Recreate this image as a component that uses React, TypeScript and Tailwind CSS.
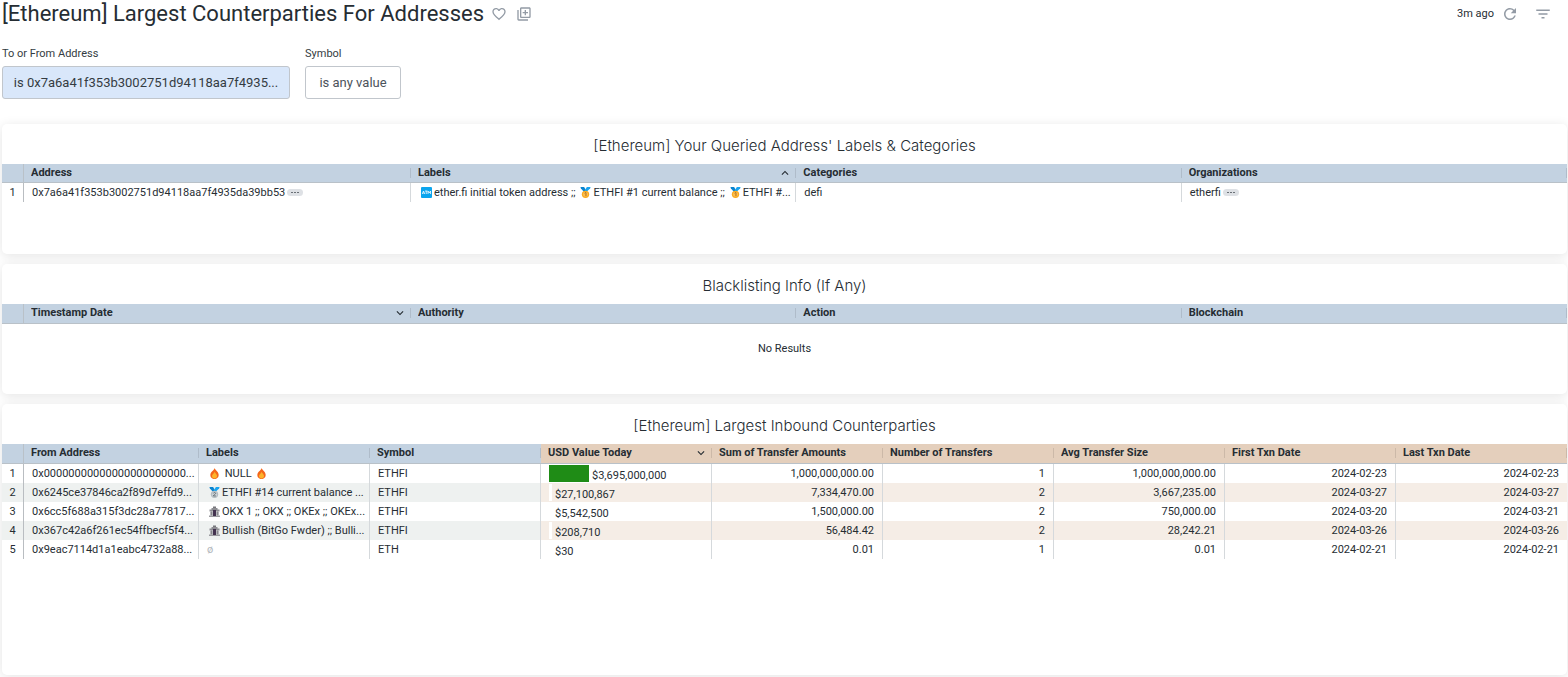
import React from "react";
import {
  MdExpandLess,
  MdExpandMore,
  MdFavoriteBorder,
  MdFilterList,
  MdOutlineLibraryAdd,
  MdRefresh,
} from "react-icons/md";

type Tone = "blue" | "tan";
type Column = { title: string; tone?: Tone; sort?: "asc" | "desc"; width?: string; numeric?: boolean };

const glyph = "mx-0.5 inline-block size-[11px] shrink-0 align-[-2px]";

function Fire() {
  return (
    <svg viewBox="0 0 22 24" className={glyph} role="img" aria-label="fire">
      <path d="M11 0c1 4 8 7 9 14 .6 6-4 10-9 10s-9.600-4-9-10c.4-3 2-5 3.500-6.500C8 5.500 10 4 11 0z" fill="#f4661b" />
      <path d="M11.500 8c.5 3 5 5 5 9.500 0 3.500-2.500 5.500-5.500 5.500s-5.500-2-5.500-5.500C5.500 13.500 10 12 11.500 8z" fill="#fdb32b" />
    </svg>
  );
}

function Medal({ rank }: { rank: 1 | 2 }) {
  const rim = rank === 1 ? "#fba81c" : "#b4bcc1";
  const face = rank === 1 ? "#fdc04f" : "#ccd2d6";
  const mark = rank === 1 ? "#a8641a" : "#5f6a70";
  return (
    <svg viewBox="0 0 22 24" className={glyph} role="img" aria-label={rank === 1 ? "gold medal" : "silver medal"}>
      <path d="M0 0h8l4 7-4 4L1 3z" fill="#0a84d0" />
      <path d="M22 0h-8l-5 8 4 3 8-8z" fill="#1ba4ee" />
      <circle cx="11" cy="16" r="8" fill={rim} />
      <circle cx="11" cy="16" r="5.500" fill={face} />
      {rank === 1 ? (
        <path d="M9 13.500l2-1.500h1v8" fill="none" stroke={mark} strokeWidth="2" />
      ) : (
        <path d="M8.500 14c.5-2.500 5-2.500 5 0 0 2-5 3-5 5.500h5.500" fill="none" stroke={mark} strokeWidth="2" />
      )}
    </svg>
  );
}

function Bank() {
  return (
    <svg viewBox="0 0 22 22" className={glyph} role="img" aria-label="bank">
      <path d="M8 1h6v4h-6z" fill="#77777c" />
      <path d="M5 4h12v3h4v4H1V7h4z" fill="#8c8c91" />
      <path d="M2 11h18v8H2z" fill="#b4b4b9" />
      <path d="M4 11h1.500v8H4zM16.500 11H18v8h-1.500z" fill="#77777c" />
      <path d="M0 19h22v3H0z" fill="#9a9a9f" />
      <path d="M8 8h6v12H8z" fill="#43324f" />
    </svg>
  );
}

function Atm() {
  return (
    <svg viewBox="0 0 22 22" className={glyph} role="img" aria-label="ATM">
      <rect width="22" height="22" rx="2" fill="#0ba5ee" />
      <path d="M2.500 14l2.500-6 2.500 6M3.500 12h3M8 8h5M10.500 8v6M14 14V8l2.500 4L19 8v6" fill="none" stroke="#fff" strokeWidth="1.500" />
    </svg>
  );
}

function More() {
  return (
    <button
      type="button"
      aria-label="More actions"
      className="ml-0.5 inline-flex h-[7px] w-4 items-center justify-center gap-px rounded-full bg-[#dee1e5] align-middle"
    >
      <i className="h-px w-0.5 bg-[#6b7177]" />
      <i className="h-px w-0.5 bg-[#6b7177]" />
      <i className="h-px w-0.5 bg-[#6b7177]" />
    </button>
  );
}

function Card({ title, children, className }: { title: string; children: React.ReactNode; className: string }) {
  return (
    <section className={`flex flex-col rounded-[5px] bg-white shadow-[0_2px_12px_rgba(0,0,0,0.11)] ${className}`}>
      <h2 className="flex h-10 shrink-0 items-center justify-center pt-1 font-[Inter,sans-serif] text-[15px] font-light text-[#262d33]">
        {title}
      </h2>
      {children}
    </section>
  );
}

function DataTable({
  columns,
  rows,
  headHeight = "h-5",
}: {
  columns: Column[];
  rows: React.ReactNode[][];
  headHeight?: string;
}) {
  return (
    <table className="w-full table-fixed border-separate border-spacing-0 text-[11px] leading-4 text-[#262d33]">
      <colgroup>
        <col className="w-[22px]" />
        {columns.map((c) => (
          <col key={c.title} className={c.width} />
        ))}
      </colgroup>
      <thead>
        <tr className={headHeight}>
          <th className="border-r border-b border-[#b9c1c8] bg-[#c3d2e1] p-0" />
          {columns.map((c) => (
            <th
              key={c.title}
              scope="col"
              className={`border-b border-[#b9c1c8] p-0 text-left align-top font-bold ${c.tone === "tan" ? "bg-[#e4cfbc]" : "bg-[#c3d2e1]"}`}
            >
              <div className="flex h-[18px] items-center pl-[7px]">
                <span className="grow truncate">{c.title}</span>
                {c.sort === "asc" && <MdExpandLess className="mr-[3px] size-3.5 shrink-0" />}
                {c.sort === "desc" && <MdExpandMore className="mr-[3px] size-3.5 shrink-0" />}
                <span className="h-2.5 w-px shrink-0 bg-black/10" />
              </div>
            </th>
          ))}
        </tr>
      </thead>
      <tbody>
        {rows.map((row, r) => (
          <tr key={r} className="h-[19px]">
            <td className={`border-r border-[#b9bdc1] p-0 text-center ${r % 2 ? "bg-[#eef1f0]" : ""}`}>{r + 1}</td>
            {row.map((cell, i) => {
              const stripe = r % 2 === 0 ? "" : columns[i].tone === "tan" ? "bg-[#f5ede6]" : "bg-[#eef1f0]";
              const edge = i < row.length - 1 ? "border-r border-[#d5d9dc]" : "";
              const side = columns[i].numeric ? "text-right" : "text-left";
              return (
                <td key={i} className={`overflow-hidden px-2 py-0 whitespace-nowrap ${stripe} ${edge} ${side}`}>
                  {cell}
                </td>
              );
            })}
          </tr>
        ))}
      </tbody>
    </table>
  );
}

function Bar({ width, color, children }: { width: number; color: string; children: React.ReactNode }) {
  return (
    <div className="flex h-[17px] items-start gap-[3px]">
      <span className="h-full shrink-0" style={{ width, background: color }} />
      <span className="pt-[3px]">{children}</span>
    </div>
  );
}

const labelColumns: Column[] = [
  { title: "Address", width: "w-[387px]" },
  { title: "Labels", sort: "asc" },
  { title: "Categories" },
  { title: "Organizations" },
];

const blacklistColumns: Column[] = [
  { title: "Timestamp Date", width: "w-[387px]", sort: "desc" },
  { title: "Authority" },
  { title: "Action" },
  { title: "Blockchain" },
];

const inboundColumns: Column[] = [
  { title: "From Address", width: "w-[175px]" },
  { title: "Labels" },
  { title: "Symbol" },
  { title: "USD Value Today", tone: "tan", sort: "desc" },
  { title: "Sum of Transfer Amounts", tone: "tan", numeric: true },
  { title: "Number of Transfers", tone: "tan", numeric: true },
  { title: "Avg Transfer Size", tone: "tan", numeric: true },
  { title: "First Txn Date", tone: "tan", numeric: true },
  { title: "Last Txn Date", tone: "tan", numeric: true },
];

const labelRows: React.ReactNode[][] = [
  [
    <>0x7a6a41f353b3002751d94118aa7f4935da39bb53<More /></>,
    <><Atm />ether.fi initial token address ;; <Medal rank={1} />ETHFI #1 current balance ;; <Medal rank={1} />ETHFI #...</>,
    "defi",
    <>etherfi<More /></>,
  ],
];

const inboundRows: React.ReactNode[][] = [
  ["0x00000000000000000000000...", <><Fire /> NULL <Fire /></>, "ETHFI", <Bar width={40} color="#1f8c16">$3,695,000,000</Bar>, "1,000,000,000.00", "1", "1,000,000,000.00", "2024-02-23", "2024-02-23"],
  ["0x6245ce37846ca2f89d7effd9...", <><Medal rank={2} />ETHFI #14 current balance ...</>, "ETHFI", <Bar width={3} color="#ffffff">$27,100,867</Bar>, "7,334,470.00", "2", "3,667,235.00", "2024-03-27", "2024-03-27"],
  ["0x6cc5f688a315f3dc28a77817...", <><Bank />OKX 1 ;; OKX ;; OKEx ;; OKEx...</>, "ETHFI", <Bar width={3} color="#ffffff">$5,542,500</Bar>, "1,500,000.00", "2", "750,000.00", "2024-03-20", "2024-03-21"],
  ["0x367c42a6f261ec54ffbecf5f4...", <><Bank />Bullish (BitGo Fwder) ;; Bulli...</>, "ETHFI", <Bar width={3} color="#ffffff">$208,710</Bar>, "56,484.42", "2", "28,242.21", "2024-03-26", "2024-03-26"],
  ["0x9eac7114d1a1eabc4732a88...", <span className="text-[#b4b9bd]">ø</span>, "ETH", <Bar width={3} color="#ffffff">$30</Bar>, "0.01", "1", "0.01", "2024-02-21", "2024-02-21"],
];

export default function App() {
  return (
    <div className="bg-white font-[Roboto,sans-serif] text-[#262d33]">
      <header className="flex h-7 items-center pr-4 pl-0.5 text-[#939ba5]">
        <h1 className="text-[22px] leading-7 text-[#262d33]">
          [Ethereum] Largest Counterparties For Addresses
        </h1>
        <button type="button" aria-label="Favorite" className="ml-[7px]">
          <MdFavoriteBorder className="size-4" />
        </button>
        <button type="button" aria-label="Add to board" className="ml-[9px]">
          <MdOutlineLibraryAdd className="size-4" />
        </button>
        <span className="ml-auto text-[11px] leading-4 text-[#262d33]">3m ago</span>
        <button type="button" aria-label="Reload" className="ml-[7px]">
          <MdRefresh className="size-[18px]" />
        </button>
        <button type="button" aria-label="Filters" className="ml-[15px]">
          <MdFilterList className="size-[18px]" />
        </button>
      </header>

      <div className="flex gap-[15px] px-0.5 pt-[18px] pb-[25px]">
        <div className="flex flex-col gap-[5px]">
          <label htmlFor="address-filter" className="text-[11px] leading-[15px] text-[#343c42]">
            To or From Address
          </label>
          <button
            id="address-filter"
            type="button"
            className="h-[33px] w-72 rounded-[3px] border border-[#c1c6cc] bg-[#d9e7fa] px-2.5 text-[13px] whitespace-nowrap text-[#343c42]"
          >
            is 0x7a6a41f353b3002751d94118aa7f4935...
          </button>
        </div>
        <div className="flex flex-col gap-[5px]">
          <label htmlFor="symbol-filter" className="text-[11px] leading-[15px] text-[#343c42]">
            Symbol
          </label>
          <button
            id="symbol-filter"
            type="button"
            className="h-[33px] w-24 rounded-[3px] border border-[#c1c6cc] bg-white px-2.5 text-[13px] whitespace-nowrap text-[#4c535b]"
          >
            is any value
          </button>
        </div>
      </div>

      <main className="flex flex-col gap-2.5 pr-px pb-0.5 pl-0.5">
        <Card title="[Ethereum] Your Queried Address' Labels & Categories" className="min-h-[130px]">
          <DataTable columns={labelColumns} rows={labelRows} headHeight="h-[19px]" />
        </Card>
        <Card title="Blacklisting Info (If Any)" className="min-h-[130px]">
          <DataTable columns={blacklistColumns} rows={[]} />
          <p className="pt-[17px] text-center text-[11px] leading-4">No Results</p>
        </Card>
        <Card title="[Ethereum] Largest Inbound Counterparties" className="min-h-[271px]">
          <DataTable columns={inboundColumns} rows={inboundRows} />
        </Card>
      </main>
    </div>
  );
}
